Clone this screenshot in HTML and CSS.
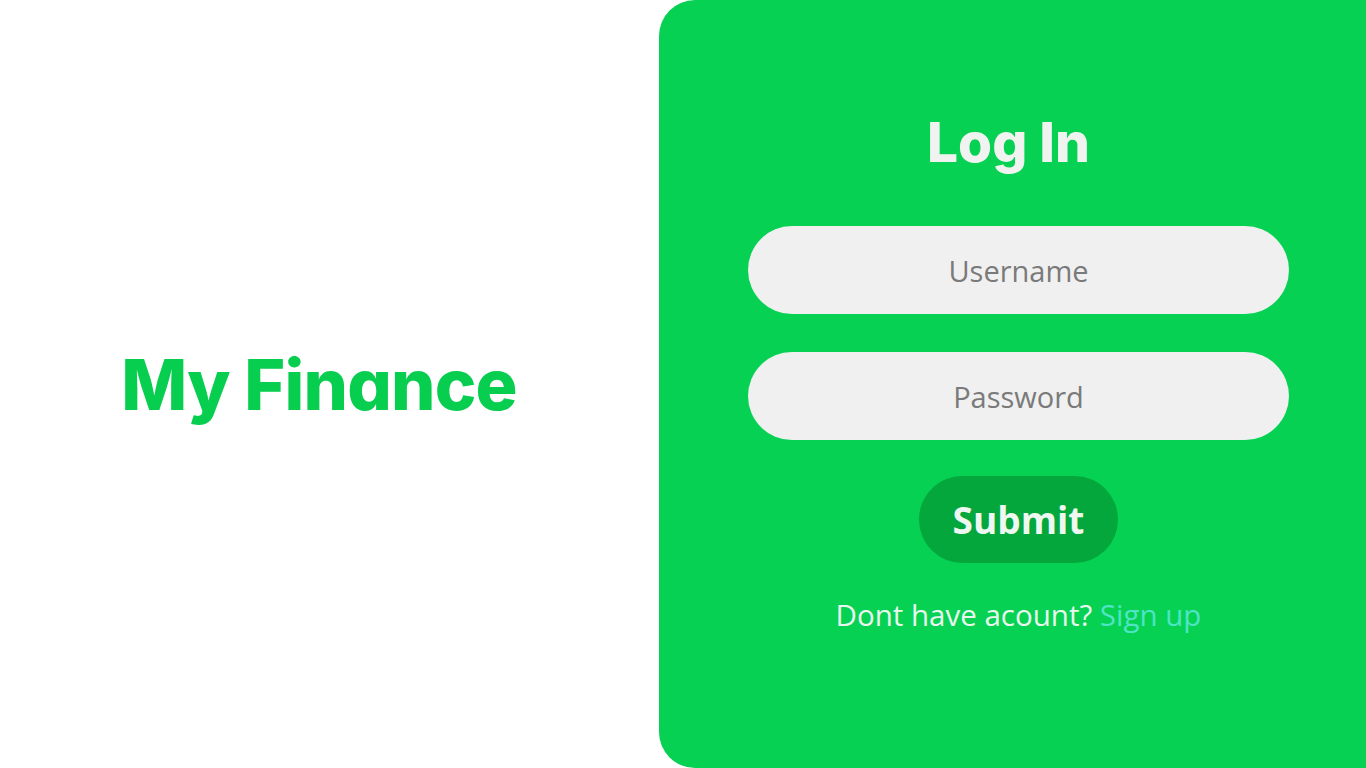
FILE: index.html
```html
<!DOCTYPE html>
<html>
<head>
<meta charset="utf-8">
<link rel="stylesheet" href="styles.css">
</head>
<body>
<div class="page">
  <section class="brand">
    <h1 class="brand-title">My Finance</h1>
  </section>
  <section class="panel">
    <form class="login">
      <h2 class="login-title">Log In</h2>
      <input class="field" type="text" placeholder="Username">
      <input class="field" type="password" placeholder="Password">
      <button class="submit" type="button">Submit</button>
      <p class="signup">Dont have acount? <a class="signup-link" href="#">Sign up</a></p>
    </form>
  </section>
</div>
</body>
</html>
```
FILE: styles.css
```css
* { box-sizing: border-box; }
html, body { margin: 0; padding: 0; }
body {
  width: 1366px;
  height: 768px;
  overflow: hidden;
  background: #ffffff;
  font-family: "Open Sans", "Noto Sans", sans-serif;
}
.page {
  display: flex;
  height: 768px;
}
.brand {
  width: 659px;
  display: flex;
  align-items: center;
  justify-content: center;
  padding-right: 21px;
}
.brand-title {
  margin: 0;
  font-family: "Inter", "Noto Sans", sans-serif;
  font-feature-settings: "cv11" 1;
  font-weight: 800;
  font-size: 70px;
  letter-spacing: -0.8px;
  color: #07ce4f;
  line-height: 1;
  padding-top: 2px;
}
.panel {
  flex: 1;
  background: #06d153;
  border-radius: 36px 0 0 36px;
  padding-left: 89px;
  padding-top: 110px;
}
.login {
  width: 541px;
  display: flex;
  flex-direction: column;
  align-items: center;
}
.login-title {
  margin: 0 20px 0 0;
  font-family: "Inter", "Noto Sans", sans-serif;
  font-weight: 800;
  font-size: 55px;
  letter-spacing: 0;
  line-height: 64px;
  color: #f1f3f1;
}
.field {
  width: 541px;
  height: 88px;
  border: none;
  border-radius: 44px;
  background: #f0f0f0;
  text-align: center;
  font-family: "Open Sans", sans-serif;
  font-size: 29px;
  color: #777;
  outline: none;
  margin-top: 52px;
}
.field + .field { margin-top: 38px; }
.field::placeholder { color: #7a7a7a; }
.submit {
  margin-top: 36px;
  width: 199px;
  height: 87px;
  border: none;
  border-radius: 44px;
  background: #03a73c;
  color: #eef8f0;
  font-family: "Open Sans", sans-serif;
  font-weight: 700;
  font-size: 37px;
  padding: 0;
}
.signup {
  margin: 32px 0 0;
  font-size: 29.5px;
  color: #eaf7ee;
  line-height: 40px;
}
.signup-link {
  color: #4ee4c4;
  text-decoration: none;
}
```
